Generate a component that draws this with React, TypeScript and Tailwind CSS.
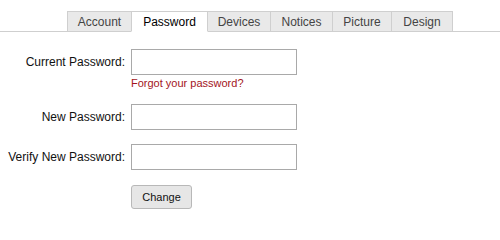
const tabs = [
  { name: "Account", width: "w-[65px]" },
  { name: "Password", width: "w-[77px]", active: true },
  { name: "Devices", width: "w-[64px]" },
  { name: "Notices", width: "w-[63px]" },
  { name: "Picture", width: "w-[60px]" },
  { name: "Design", width: "w-[62px]" },
];

const Field = ({ label }: { label: string }) => (
  <div className="flex items-center">
    <label className="w-[125px] text-right text-[12px] text-[#111]">{label}</label>
    <input type="password" className="ml-[6px] h-[26px] w-[166px] border border-[#a9a9a9] bg-white outline-none" />
  </div>
);

export default function App() {
  return (
    <div className="h-[220px] w-[500px] bg-white pt-[11px] font-['Liberation_Sans',Arial,sans-serif]">
      <div className="flex border-b border-[#cfcfcf] pl-[67px]">
        {tabs.map((tab, i) => (
          <div
            key={tab.name}
            className={`-mb-px flex h-[21px] items-center justify-center border text-[12px] ${tab.width} ${
              i > 0 ? "-ml-px" : ""
            } ${
              tab.active
                ? "relative z-10 border-[#cfcfcf] border-b-white bg-white text-black"
                : "border-[#cfcfcf] bg-[#e9e9e9] text-[#444]"
            }`}
          >
            {tab.name}
          </div>
        ))}
      </div>

      <div className="pt-[17px]">
        <Field label="Current Password:" />
        <div className="ml-[131px] mt-[2px] text-[11px] leading-[13px] text-[#a3141c]">Forgot your password?</div>
        <div className="mt-[14px]">
          <Field label="New Password:" />
        </div>
        <div className="mt-[14px]">
          <Field label="Verify New Password:" />
        </div>
        <div className="ml-[131px] mt-[14px]">
          <button className="h-[24px] w-[61px] rounded-[3px] border border-[#b8b8b8] bg-[#e6e6e6] text-[11px] text-[#111]">
            Change
          </button>
        </div>
      </div>
    </div>
  );
}
